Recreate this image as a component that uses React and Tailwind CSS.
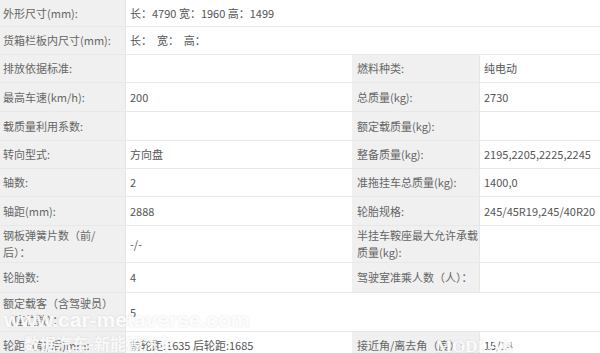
const rows = [
  { h: "h-[27px]", l1: "外形尺寸(mm):", v1: "长：4790 宽：1960 高：1499", span: true },
  { h: "h-[28px]", l1: "货箱栏板内尺寸(mm):", v1: "长：  宽：  高：", span: true },
  { h: "h-[28px]", l1: "排放依据标准:", v1: "", l2: "燃料种类:", v2: "纯电动" },
  { h: "h-[29px]", l1: "最高车速(km/h):", v1: "200", l2: "总质量(kg):", v2: "2730" },
  { h: "h-[29px]", l1: "载质量利用系数:", v1: "", l2: "额定载质量(kg):", v2: "" },
  { h: "h-[28px]", l1: "转向型式:", v1: "方向盘", l2: "整备质量(kg):", v2: "2195,2205,2225,2245" },
  { h: "h-[28px]", l1: "轴数:", v1: "2", l2: "准拖挂车总质量(kg):", v2: "1400,0" },
  { h: "h-[29px]", l1: "轴距(mm):", v1: "2888", l2: "轮胎规格:", v2: "245/45R19,245/40R20" },
  {
    h: "h-[37px]",
    l1: ["钢板弹簧片数（前/", "后）："],
    v1: "-/-",
    l2: ["半挂车鞍座最大允许承载", "质量(kg):"],
    v2: "",
  },
  { h: "h-[30px]", l1: "轮胎数:", v1: "4", l2: "驾驶室准乘人数（人）：", v2: "" },
  { h: "h-[39px]", l1: ["额定载客（含驾驶员）", "（座位数）："], v1: "5", span: true },
  { h: "h-[28px]", l1: "轮距（前/后)mm:", v1: "前轮距:1635 后轮距:1685", l2: "接近角/离去角（度）:", v2: "15/14" },
];

function Text({ value }) {
  if (Array.isArray(value)) {
    return (
      <span>
        {value[0]}
        <br />
        {value[1]}
      </span>
    );
  }
  return <span className="whitespace-pre">{value}</span>;
}

export default function App() {
  return (
    <div
      className="relative h-[353px] w-[600px] overflow-hidden bg-white text-[11px] leading-[17px]"
      style={{ fontFamily: '"Noto Sans CJK SC", "Noto Sans", sans-serif' }}
    >
      {rows.map((r, i) => (
        <div
          key={i}
          className={`grid grid-cols-[126px_226px_128px_120px] border-b border-[#e8e8e8] ${r.h}`}
        >
          <div className="flex items-center border-r border-[#e6e6e6] bg-[#f0f0f0] pl-[3px] text-[#666]">
            <Text value={r.l1} />
          </div>
          <div
            className={`flex items-center pl-[4px] text-[#555] ${r.span ? "col-span-3" : ""}`}
          >
            <Text value={r.v1} />
          </div>
          {!r.span && (
            <>
              <div className="flex items-center border-r border-[#e6e6e6] bg-[#f0f0f0] pl-[5px] text-[#666]">
                <Text value={r.l2} />
              </div>
              <div className="flex items-center pl-[4px] text-[#555]">
                <Text value={r.v2} />
              </div>
            </>
          )}
        </div>
      ))}

      {/* watermark, fades out over the white cells */}
      <div className="pointer-events-none absolute left-[4px] top-[307px] w-[266px] overflow-hidden">
        <div
          className="whitespace-nowrap text-[21px] font-bold leading-[26px] text-white/90"
          style={{ fontFamily: '"Liberation Sans", sans-serif', textShadow: "0 0 2px rgba(120,120,120,0.25)" }}
        >
          www.car-metaverse.com
        </div>
      </div>
      <div
        className="pointer-events-none absolute left-[24px] top-[333px] whitespace-nowrap text-[16px] font-bold leading-[20px] text-white/85"
        style={{ textShadow: "0 0 2px rgba(120,120,120,0.25)" }}
      >
        数据汽车-新能源汽车
      </div>
      <div
        className="pointer-events-none absolute left-[436px] top-[337px] whitespace-nowrap text-[17px] font-bold leading-[20px] text-white/90"
        style={{ fontFamily: '"Liberation Serif", serif', textShadow: "0 0 2px rgba(120,120,120,0.25)" }}
      >
        MODLAB
      </div>
    </div>
  );
}
